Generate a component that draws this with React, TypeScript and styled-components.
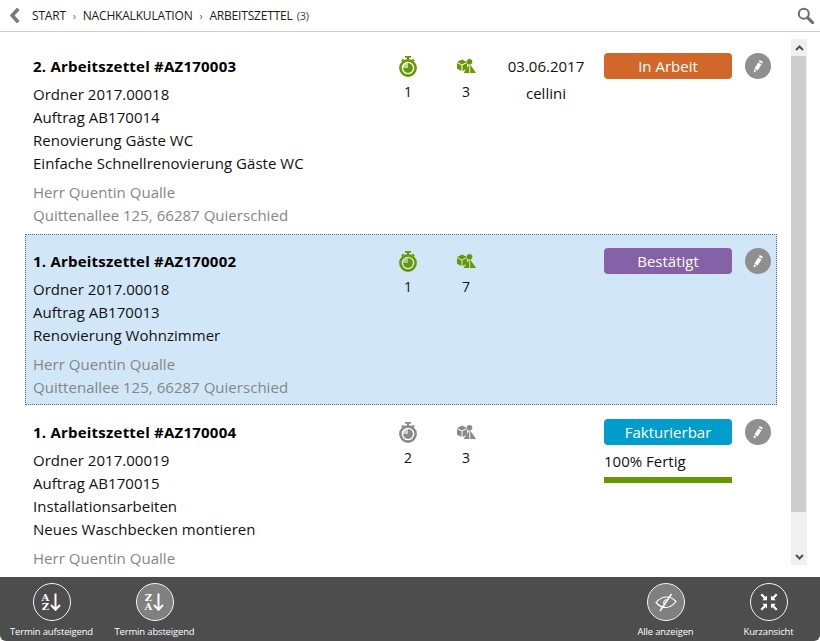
import React from "react";
import styled, { createGlobalStyle } from "styled-components";

const Global = createGlobalStyle`
  html, body { margin: 0; padding: 0; background: #fff; }
  body { font-family: "Open Sans", "Liberation Sans", sans-serif; color: #000; }
`;

const Screen = styled.div`
  width: 820px;
  height: 641px;
  display: flex;
  flex-direction: column;
  overflow: hidden;
  border-radius: 6px;
  background: #fff;
`;

const Header = styled.header`
  height: 31px;
  flex: none;
  display: flex;
  align-items: center;
  gap: 12px;
  padding: 0 6px 0 10px;
  border-bottom: 1px solid #cfcfcf;
`;

const Crumbs = styled.nav`
  flex: 1;
  display: flex;
  align-items: center;
  gap: 7px;
  font-size: 12px;
  letter-spacing: -0.18px;
  color: #1a1a1a;
`;

const Sep = styled.span`
  font-size: 10px;
  color: #555;
`;

const Count = styled.span`
  font-size: 11px;
  color: #444;
  margin-left: -3px;
`;

const Body = styled.main`
  flex: 1;
  min-height: 0;
  display: flex;
  padding: 7px 13px 0 25px;
  gap: 14px;
`;

const List = styled.div`
  flex: 1;
  min-width: 0;
  overflow: hidden;
`;

const Row = styled.article<{ $selected?: boolean; $h: number }>`
  display: grid;
  grid-template-columns: 346px 58px 58px 109px 128px 39px;
  justify-content: start;
  padding: 14px 0 0 8px;
  box-sizing: border-box;
  height: ${(p) => p.$h}px;
  background: ${(p) => (p.$selected ? "#d1e7f8" : "transparent")};
  outline: ${(p) => (p.$selected ? "1px dotted #4c6f8f" : "none")};
  outline-offset: -1px;
`;

const Info = styled.div`
  font-size: 15px;
  line-height: 23px;
  letter-spacing: 0.03px;
  color: #111;
`;

const Title = styled.div`
  font-weight: 700;
  line-height: 23px;
  padding-top: 2px;
  margin-bottom: 5px;
  letter-spacing: 0.22px;
  color: #000;
`;

const Customer = styled.div`
  margin-top: 6px;
  color: #858585;
`;

const Stat = styled.div`
  display: flex;
  flex-direction: column;
  align-items: center;
  font-size: 14px;
  line-height: 20px;
  color: #111;
  padding-top: 2px;
`;

const StatIcon = styled.div<{ $color: string }>`
  height: 22px;
  margin-bottom: 5px;
  display: flex;
  align-items: center;
  color: ${(p) => p.$color};
`;

const Meta = styled.div`
  display: flex;
  flex-direction: column;
  align-items: center;
  font-size: 15px;
  line-height: 27px;
  letter-spacing: 0;
  color: #111;
  padding-right: 7px;
`;

const StatusCol = styled.div`
  display: flex;
  flex-direction: column;
`;

const Pill = styled.div<{ $bg: string }>`
  height: 26px;
  border-radius: 4px;
  background: ${(p) => p.$bg};
  color: #fff;
  font-size: 15px;
  line-height: 26px;
  text-align: center;
`;

const Progress = styled.div`
  font-size: 15px;
  line-height: 20px;
  margin-top: 6px;
  color: #111;
`;

const Bar = styled.div`
  height: 6px;
  margin-top: 6px;
  background: #669900;
`;

const EditCell = styled.div`
  display: flex;
  justify-content: flex-end;
`;

const EditBtn = styled.button`
  width: 26px;
  height: 26px;
  padding: 0;
  border: 0;
  border-radius: 50%;
  background: #8f8f8f;
  color: #fff;
  display: flex;
  align-items: center;
  justify-content: center;
`;

const Scrollbar = styled.div`
  width: 16px;
  flex: none;
  display: flex;
  flex-direction: column;
  background: #f0f0f0;
  margin-bottom: 12px;
`;

const ScrollArrow = styled.div`
  height: 17px;
  flex: none;
  display: flex;
  align-items: center;
  justify-content: center;
  color: #505050;
`;

const ScrollTrack = styled.div`
  flex: 1;
  display: flex;
  flex-direction: column;
`;

const ScrollThumb = styled.div`
  flex: none;
  height: 456px;
  margin-right: 1px;
  background: #cdcdcd;
`;

const Footer = styled.footer`
  height: 64px;
  flex: none;
  display: flex;
  justify-content: space-between;
  background: #4d4d4d;
`;

const Group = styled.div`
  display: flex;
`;

const Action = styled.div`
  width: 103px;
  display: flex;
  flex-direction: column;
  align-items: center;
  padding-top: 6px;
  box-sizing: border-box;
`;

const Circle = styled.div<{ $active?: boolean }>`
  width: 38px;
  height: 38px;
  box-sizing: border-box;
  border: 1.5px solid #f4f4f4;
  border-radius: 50%;
  background: ${(p) => (p.$active ? "#808080" : "transparent")};
  color: #fff;
  display: flex;
  align-items: center;
  justify-content: center;
`;

const ActionLabel = styled.div`
  margin-top: 4px;
  font-size: 9.5px;
  line-height: 14px;
  letter-spacing: -0.17px;
  color: #fff;
  white-space: nowrap;
`;

const SortLetters = styled.div`
  display: flex;
  flex-direction: column;
  align-items: center;
  font-family: "DejaVu Serif", serif;
  font-weight: 700;
  font-size: 10px;
  line-height: 9.5px;
  margin-right: 1px;
`;

const Stopwatch = () => (
  <svg width="18" height="21" viewBox="0 0 18 21">
    <path d="M6 0h6v1.8h-2v2.2H8V1.8H6z" fill="currentColor" />
    <path d="M2.2 4.2l1.8-1.5 1.4 1.4-1.8 1.6zM15.8 4.2L14 2.7l-1.4 1.4 1.8 1.6z" fill="currentColor" />
    <circle cx="9" cy="12" r="7.6" fill="none" stroke="currentColor" strokeWidth="2.6" />
    <circle cx="9" cy="12" r="5" fill="currentColor" opacity="0.4" />
    <path d="M9 7.2a4.8 4.8 0 1 1-4.8 4.8H9z" fill="currentColor" />
  </svg>
);

const Boxes = () => (
  <svg width="19" height="14" viewBox="0 0 19 14" fill="currentColor">
    <circle cx="12.5" cy="2.8" r="2.8" />
    <path d="M12.3 5.5L6.5 14h5.8zM13.2 5.5V14H19z" />
    <path d="M0 3L5 0.5 10 3 5 5.5z" />
    <path d="M0 4l4.5 2.2V12L0 9.8zM5.5 6.2L10 4v5.8L5.5 12z" />
  </svg>
);

const Pencil = () => (
  <svg width="12" height="14" viewBox="0 0 12 14" fill="currentColor">
    <path d="M7.8 1l3.2 2-1 1.6-3.2-2z" />
    <path d="M6.3 3.4l3.2 2-3.9 6-3.2-2z" />
    <path d="M2 10.3l2.6 1.7L1.6 13.4z" />
  </svg>
);

const Back = () => (
  <svg width="10" height="15" viewBox="0 0 10 15">
    <path d="M8.3 0.8L2.2 7.5l6.1 6.7" fill="none" stroke="#7a7a7a" strokeWidth="3.6" />
  </svg>
);

const Search = () => (
  <svg width="17" height="17" viewBox="0 0 17 17">
    <circle cx="6.8" cy="6.8" r="5" fill="none" stroke="#6e6e6e" strokeWidth="2" />
    <path d="M10.6 10.6l5 5" stroke="#6e6e6e" strokeWidth="3" strokeLinecap="round" />
  </svg>
);

const Down = () => (
  <svg width="11" height="18" viewBox="0 0 11 18">
    <path d="M5.5 0.5v16M1 12l4.5 4.8L10 12" fill="none" stroke="currentColor" strokeWidth="2" />
  </svg>
);

const EyeOff = () => (
  <svg width="24" height="22" viewBox="0 0 24 22">
    <path d="M2 11.5C6 6.5 10 6 13 6c2.5 0 6 1 9 4.5C18 15.5 15 16.5 12 16.5c-3.5 0-7-1.5-10-5z" fill="none" stroke="currentColor" strokeWidth="1.2" />
    <path d="M12.5 8.5a3 3 0 0 0-2 5" fill="none" stroke="currentColor" strokeWidth="1.2" />
    <path d="M17.5 3L6 20" stroke="currentColor" strokeWidth="1.4" />
  </svg>
);

const Collapse = () => (
  <svg width="20" height="20" viewBox="0 0 20 20" fill="currentColor">
    <path d="M1.5 3L3 1.5 6.5 5 8 3.5V8.2H3.3L4.9 6.6zM18.5 3L17 1.5 13.5 5 12 3.5V8.2h4.7l-1.6-1.6zM1.5 17L3 18.5 6.5 15 8 16.5v-4.7H3.3l1.6 1.6zM18.5 17L17 18.5 13.5 15 12 16.5v-4.7h4.7l-1.6 1.6z" />
  </svg>
);

type Item = {
  title: string;
  lines: string[];
  timers: number;
  boxes: number;
  date?: string;
  user?: string;
  status: string;
  color: string;
  iconColor: string;
  height: number;
  selected?: boolean;
  progress?: string;
  address?: string;
};

const items: Item[] = [
  {
    title: "2. Arbeitszettel #AZ170003",
    lines: ["Ordner 2017.00018", "Auftrag AB170014", "Renovierung Gäste WC", "Einfache Schnellrenovierung Gäste WC"],
    timers: 1,
    boxes: 3,
    date: "03.06.2017",
    user: "cellini",
    status: "In Arbeit",
    color: "#d2672a",
    iconColor: "#669900",
    height: 195,
    address: "Quittenallee 125, 66287 Quierschied",
  },
  {
    title: "1. Arbeitszettel #AZ170002",
    lines: ["Ordner 2017.00018", "Auftrag AB170013", "Renovierung Wohnzimmer"],
    timers: 1,
    boxes: 7,
    status: "Bestätigt",
    color: "#8561a8",
    iconColor: "#669900",
    height: 171,
    selected: true,
    address: "Quittenallee 125, 66287 Quierschied",
  },
  {
    title: "1. Arbeitszettel #AZ170004",
    lines: ["Ordner 2017.00019", "Auftrag AB170015", "Installationsarbeiten", "Neues Waschbecken montieren"],
    timers: 2,
    boxes: 3,
    status: "Fakturierbar",
    color: "#009ccc",
    iconColor: "#8a8a8a",
    height: 172,
    progress: "100% Fertig",
  },
];

export default function App() {
  return (
    <Screen>
      <Global />
      <Header>
        <Back />
        <Crumbs>
          <span>START</span>
          <Sep>›</Sep>
          <span>NACHKALKULATION</span>
          <Sep>›</Sep>
          <span>ARBEITSZETTEL</span>
          <Count>(3)</Count>
        </Crumbs>
        <Search />
      </Header>
      <Body>
        <List>
          {items.map((it) => (
            <Row key={it.title} $selected={it.selected} $h={it.height}>
              <Info>
                <Title>{it.title}</Title>
                {it.lines.map((l) => (
                  <div key={l}>{l}</div>
                ))}
                <Customer>
                  <div>Herr Quentin Qualle</div>
                  {it.address && <div>{it.address}</div>}
                </Customer>
              </Info>
              <Stat>
                <StatIcon $color={it.iconColor}>
                  <Stopwatch />
                </StatIcon>
                {it.timers}
              </Stat>
              <Stat>
                <StatIcon $color={it.iconColor}>
                  <Boxes />
                </StatIcon>
                {it.boxes}
              </Stat>
              <Meta>
                <span>{it.date}</span>
                <span>{it.user}</span>
              </Meta>
              <StatusCol>
                <Pill $bg={it.color}>{it.status}</Pill>
                {it.progress && (
                  <>
                    <Progress>{it.progress}</Progress>
                    <Bar />
                  </>
                )}
              </StatusCol>
              <EditCell>
                <EditBtn>
                  <Pencil />
                </EditBtn>
              </EditCell>
            </Row>
          ))}
        </List>
        <Scrollbar>
          <ScrollArrow>
            <svg width="9" height="6" viewBox="0 0 9 6">
              <path d="M1 5l3.5-3.5L8 5" fill="none" stroke="currentColor" strokeWidth="2" />
            </svg>
          </ScrollArrow>
          <ScrollTrack>
            <ScrollThumb />
          </ScrollTrack>
          <ScrollArrow>
            <svg width="9" height="6" viewBox="0 0 9 6">
              <path d="M1 1l3.5 3.5L8 1" fill="none" stroke="currentColor" strokeWidth="2" />
            </svg>
          </ScrollArrow>
        </Scrollbar>
      </Body>
      <Footer>
        <Group>
          <Action>
            <Circle>
              <SortLetters>
                <span>A</span>
                <span>Z</span>
              </SortLetters>
              <Down />
            </Circle>
            <ActionLabel>Termin aufsteigend</ActionLabel>
          </Action>
          <Action>
            <Circle $active>
              <SortLetters>
                <span>Z</span>
                <span>A</span>
              </SortLetters>
              <Down />
            </Circle>
            <ActionLabel>Termin absteigend</ActionLabel>
          </Action>
        </Group>
        <Group>
          <Action>
            <Circle $active>
              <EyeOff />
            </Circle>
            <ActionLabel>Alle anzeigen</ActionLabel>
          </Action>
          <Action>
            <Circle>
              <Collapse />
            </Circle>
            <ActionLabel>Kurzansicht</ActionLabel>
          </Action>
        </Group>
      </Footer>
    </Screen>
  );
}
